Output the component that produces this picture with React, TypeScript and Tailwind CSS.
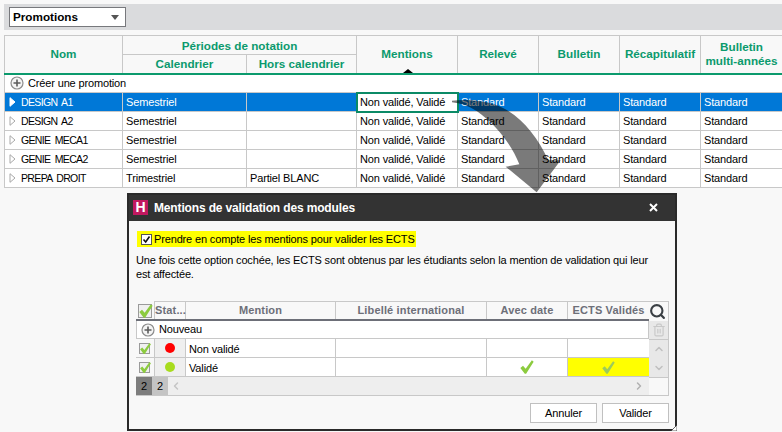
import { ChevronDown, ChevronLeft, ChevronRight, ChevronUp, Search, Trash2 } from 'lucide-react';

const rows = [
  { nom: 'DESIGN A1', periode: 'Semestriel', hors: '', selected: true },
  { nom: 'DESIGN A2', periode: 'Semestriel', hors: '', selected: false },
  { nom: 'GENIE MECA1', periode: 'Semestriel', hors: '', selected: false },
  { nom: 'GENIE MECA2', periode: 'Semestriel', hors: '', selected: false },
  { nom: 'PREPA DROIT', periode: 'Trimestriel', hors: 'Partiel BLANC', selected: false },
];

const th = 'border border-[#c8c8c8] font-bold text-[11.7px] tracking-normal leading-[14px] text-[#0b9a6d] text-center p-0';
const td = 'border border-[#c8c8c8] pl-[3px] whitespace-nowrap overflow-hidden font-normal';
const gridCols = 'grid grid-cols-[18px_32px_150px_151px_81px_81px_81px] grid-rows-[18px]';

function PlusIcon() {
  return (
    <svg width="14" height="14" viewBox="0 0 14 14" className="shrink-0">
      <circle cx="7" cy="7" r="6" fill="#f4f4f4" stroke="#8c8c8c" strokeWidth="1.2" />
      <path d="M7 3.5v7M3.5 7h7" stroke="#5c5c5c" strokeWidth="1.6" />
    </svg>
  );
}

function RowArrow({ active }: { active: boolean }) {
  return (
    <svg width="7" height="10" viewBox="0 0 7 10" className="shrink-0">
      <path d="M1 .7 6 5 1 9.3Z" fill="#ffffff" stroke={active ? '#ffffff' : '#a8a8a8'} />
    </svg>
  );
}

function Check({ size = 18, color = '#8ccb3f' }: { size?: number; color?: string }) {
  return (
    <svg width={size} height={size} viewBox="0 0 18 18">
      <path d="M1.5 10 4.5 7.5 7.5 11 14.5 1.5 16.5 3 8 16.5 6.5 16.5Z" fill={color} />
    </svg>
  );
}

function CheckBox({ size }: { size: number }) {
  return (
    <div className="relative flex items-center justify-center" style={{ width: size, height: size }}>
      <div className="absolute left-[1px] bottom-[1px] border border-[#9a9a9a] bg-[#f0f0f0]" style={{ width: size - 3, height: size - 3 }} />
      <div className="absolute left-[1px] bottom-0">
        <Check size={size - 1} />
      </div>
    </div>
  );
}

function Dialog() {
  return (
    <div className="absolute left-[127px] top-[193px] w-[550px] h-[238px] border-2 border-[#2a2a2a] bg-[#f8f8f8] flex flex-col">
      <div className="h-[26px] bg-[#333333] flex items-center pl-[4px] pr-[17px] pb-[1px] shrink-0">
        <div className="w-[15px] h-[15px] bg-[#c2185f] text-white text-[14px] leading-[15px] font-bold text-center">H</div>
        <div className="ml-[6px] text-white font-bold text-[12px] tracking-[-0.15px]">Mentions de validation des modules</div>
        <svg width="9" height="9" viewBox="0 0 9 9" className="ml-auto">
          <path d="M1 1l7 7M8 1 1 8" stroke="#ffffff" strokeWidth="2" />
        </svg>
      </div>

      <div className="flex-1 flex flex-col pl-[6px] pr-[7px]">
        <div className="mt-[10px] ml-[2px] w-[279px] h-[16px] bg-[#ffff00] flex items-center pl-[4px] gap-[2px] whitespace-nowrap">
          <div className="w-[11px] h-[11px] border border-[#555] bg-white flex items-center justify-center shrink-0">
            <svg width="9" height="9" viewBox="0 0 9 9">
              <path d="M1.5 4.5 3.7 7 7.5 1.5" fill="none" stroke="#111" strokeWidth="1.6" />
            </svg>
          </div>
          <span>Prendre en compte les mentions pour valider les ECTS</span>
        </div>
        <p className="mt-[6px] ml-[1px] leading-[14px] w-[520px]">
          Une fois cette option cochée, les ECTS sont obtenus par les étudiants selon la mention de validation qui leur est affectée.
        </p>

        <div className="mt-[20px] flex ml-[1px] w-[533px]">
          <div className="w-[513px] shrink-0">
            <div className={`${gridCols} h-[20px] border-b-2 border-[#6d6f78] font-bold text-[11px] tracking-[0.15px] text-[#6d6f78] text-center leading-[17px]`}>
              <div className="flex items-center pl-[1px]"><CheckBox size={17} /></div>
              <div className="border-x border-t border-[#c8c8c8] text-left">Stat...</div>
              <div className="border-t border-r border-[#c8c8c8]">Mention</div>
              <div className="border-t border-r border-[#c8c8c8]">Libellé international</div>
              <div className="border-t border-r border-[#c8c8c8]">Avec date</div>
              <div className="border-t border-[#c8c8c8]">ECTS Validés</div>
              <div />
            </div>
            <div className="h-[18px] bg-white border-x border-b border-[#c8c8c8] flex items-center gap-[4px] pl-[4px]">
              <PlusIcon />
              <span>Nouveau</span>
            </div>
            {[
              { label: 'Non validé', dot: 'bg-[#ff0000]', checks: false },
              { label: 'Validé', dot: 'bg-[#a8dc1e]', checks: true },
            ].map((r) => (
              <div key={r.label} className={`${gridCols} h-[19px] border-b border-[#c8c8c8]`}>
                <div className="flex items-center justify-center"><CheckBox size={14} /></div>
                <div className="border-x border-[#c8c8c8] bg-[#efefef] flex items-center justify-center">
                  <div className={`w-[10px] h-[10px] rounded-full ${r.dot}`} />
                </div>
                <div className="bg-white border-r border-[#c8c8c8] pl-[3px] h-[18px] overflow-hidden leading-[20px]">{r.label}</div>
                <div className="bg-white border-r border-[#c8c8c8]" />
                <div className="bg-white border-r border-[#c8c8c8] flex items-center justify-center">
                  {r.checks && <Check size={16} />}
                </div>
                <div className={`flex items-center justify-center ${r.checks ? 'bg-[#ffff00]' : 'bg-white'}`}>
                  {r.checks && <Check size={15} color="#9ccb5c" />}
                </div>
                <div />
              </div>
            ))}
            <div className="h-[19px] border-b border-[#c8c8c8] bg-[#eeeeee] flex items-center">
              <div className="w-[16px] h-full bg-[#7d7d7d] text-center leading-[19px]">2</div>
              <div className="w-[16px] h-full bg-[#c4c4c4] text-center leading-[19px]">2</div>
              <ChevronLeft size={12} strokeWidth={3} className="ml-[2px] text-[#c4c4c4]" />
              <ChevronRight size={12} strokeWidth={3} className="ml-auto mr-[4px] text-[#b0b0b0]" />
            </div>
          </div>
          <div className="flex-1 flex flex-col">
            <div className="h-[20px] border-t border-r border-[#c8c8c8] flex items-center justify-center">
              <Search size={17} strokeWidth={3} className="text-[#3a3f44] -ml-[2px]" />
            </div>
            <div className="h-[18px] bg-[#e8e8e8] flex items-center justify-center border-r border-[#c8c8c8]">
              <Trash2 size={14} className="text-[#c8c8c8]" />
            </div>
            <div className="h-[38px] bg-[#e8e8e8] border-t border-r border-[#c8c8c8] flex flex-col items-center justify-between py-[3px]">
              <ChevronUp size={12} strokeWidth={3} className="text-[#c0c0c0]" />
              <ChevronDown size={12} strokeWidth={3} className="text-[#c0c0c0]" />
            </div>
            <div className="h-[19px] border border-l-0 border-[#c8c8c8]" />
          </div>
        </div>

        <div className="mt-[7px] flex justify-end gap-[5px] w-[534px]">
          <button className="w-[67px] h-[20px] bg-white border border-[#c0c0c0]">Annuler</button>
          <button className="w-[67px] h-[20px] bg-white border border-[#c0c0c0]">Valider</button>
        </div>
      </div>

      <svg width="6" height="6" viewBox="0 0 6 6" className="absolute right-[-2px] bottom-[-2px]">
        <path d="M6 0v6H0Z" fill="#ffffff" stroke="#2a2a2a" strokeWidth="0.7" />
      </svg>
    </div>
  );
}

export default function App() {
  return (
    <div className="relative w-[782px] h-[432px] overflow-hidden bg-[#f8f8f8] text-[11px] tracking-[-0.15px] text-black font-['Liberation_Sans',sans-serif]">
      {/* Toolbar */}
      <div className="pt-[4px] pl-[4px]">
        <div className="h-[26px] bg-[#dadbdd] flex items-center pl-[5px]">
          <div className="w-[117px] h-[20px] bg-white border border-[#77787c] flex items-center justify-between pl-[3px] pr-[6px]">
            <span className="font-bold text-[11.7px] tracking-normal">Promotions</span>
            <span className="w-0 h-0 border-x-[4px] border-x-transparent border-t-[5px] border-t-[#555]" />
          </div>
        </div>
      </div>

      {/* Promotions table */}
      <table className="mt-[5px] ml-[4px] w-[778px] table-fixed border-collapse">
        <colgroup>
          <col className="w-[118px]" />
          <col className="w-[124px]" />
          <col className="w-[110px]" />
          <col className="w-[101px]" />
          <col className="w-[81px]" />
          <col className="w-[81px]" />
          <col className="w-[81px]" />
          <col className="w-[82px]" />
        </colgroup>
        <thead className="bg-[#f8f8f8]">
          <tr className="h-[19px]">
            <th rowSpan={2} className={th}>Nom</th>
            <th colSpan={2} className={`${th} pt-[1px]`}>Périodes de notation</th>
            <th rowSpan={2} className={`${th} relative`}>
              Mentions
              <span className="absolute left-[46px] bottom-0 w-0 h-0 border-x-[5px] border-x-transparent border-b-[4px] border-b-black" />
            </th>
            <th rowSpan={2} className={th}>Relevé</th>
            <th rowSpan={2} className={th}>Bulletin</th>
            <th rowSpan={2} className={th}>Récapitulatif</th>
            <th rowSpan={2} className={th}>Bulletin<br />multi-années</th>
          </tr>
          <tr className="h-[19px]">
            <th className={th}>Calendrier</th>
            <th className={th}>Hors calendrier</th>
          </tr>
        </thead>
        <tbody>
          <tr className="h-[19px] bg-white border-t-2 border-t-[#0b9a6d]">
            <td colSpan={8} className="border-x border-b border-[#c8c8c8] pl-[5px]">
              <div className="flex items-center gap-[4px]">
                <PlusIcon />
                <span>Créer une promotion</span>
              </div>
            </td>
          </tr>
          {rows.map((row) => {
            const rowClass = row.selected ? 'bg-[#0078d7] text-white' : 'bg-white';
            return (
              <tr key={row.nom} className={`h-[19px] ${rowClass}`}>
                <td className={td}>
                  <div className="flex items-center gap-[5px] pl-[1px]">
                    <RowArrow active={row.selected} />
                    <span className="pt-[1px] text-[10.5px] tracking-[-0.65px] [word-spacing:2px]">{row.nom}</span>
                  </div>
                </td>
                <td className={td}>{row.periode}</td>
                <td className={td}>{row.hors}</td>
                <td className={`${td} ${row.selected ? 'bg-white text-black outline-2 -outline-offset-1 outline-[#0b8a66]' : ''}`}>Non validé, Validé</td>
                <td className={td}>Standard</td>
                <td className={td}>Standard</td>
                <td className={td}>Standard</td>
                <td className={td}>Standard</td>
              </tr>
            );
          })}
        </tbody>
      </table>

      {/* Curved arrow over the table */}
      <svg width="130" height="115" viewBox="0 0 390 345" className="absolute left-[440px] top-[85px]">
        <path
          d="M36 47C90 42 150 48 195 72C250 102 295 160 325 226L362 226L290 322L197 245L238 238C215 180 170 120 110 78C85 62 60 54 36 52Z"
          fill="#000000"
          fillOpacity="0.52"
        />
      </svg>

      <Dialog />
    </div>
  );
}
